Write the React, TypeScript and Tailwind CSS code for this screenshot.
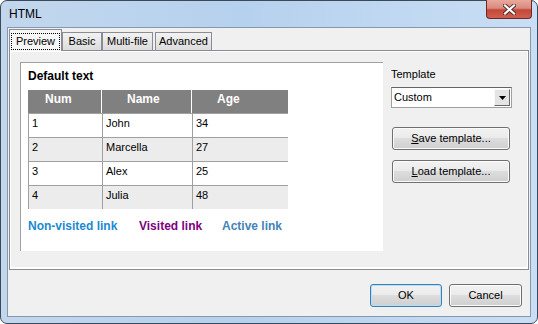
import React from 'react';

const rows = [
  { num: '1', name: 'John', age: '34' },
  { num: '2', name: 'Marcella', age: '27' },
  { num: '3', name: 'Alex', age: '25' },
  { num: '4', name: 'Julia', age: '48' },
];

const tabs = [
  { label: 'Basic', w: 'w-[40px]', ml: '' },
  { label: 'Multi-file', w: 'w-[51px]', ml: '' },
  { label: 'Advanced', w: 'w-[57px]', ml: 'ml-[2px]' },
];

const Win7Button: React.FC<{ className?: string; focused?: boolean; children: React.ReactNode }> = ({ className = '', focused, children }) => (
  <div
    className={`flex items-center justify-center rounded-[3px] border text-[11px] text-black ${
      focused ? 'border-[#3c7fb1] shadow-[inset_0_0_0_1px_#b3e0f8]' : 'border-[#707070] shadow-[inset_0_0_0_1px_#fbfbfb]'
    } bg-[linear-gradient(to_bottom,#f2f2f2_0%,#ebebeb_45%,#dddddd_50%,#cfcfcf_100%)] ${className}`}
  >
    {children}
  </div>
);

const App: React.FC = () => {
  return (
    <div className="w-[538px] h-[324px] overflow-hidden bg-white font-['Liberation_Sans',Arial,sans-serif]">
      <div className="w-full h-full flex flex-col rounded-[7px] border border-[#3b4a59] bg-[linear-gradient(to_right,#c2d7ed,#b6d1ee_45%,#c9def4)] px-[6px] pb-[6px]">
        {/* Title bar */}
        <div className="h-[26px] flex items-start justify-between">
          <span className="pl-[2px] pt-[6px] text-[12px] leading-[14px] text-black">HTML</span>
          <div className="w-[46px] h-[19px] -mt-px mr-[-1px] rounded-b-[4px] border border-t-0 border-[#6d2a24] bg-[linear-gradient(to_bottom,#e9a99c_0%,#d98b7e_45%,#c4483a_55%,#d0604f_100%)] flex items-center justify-center">
            <svg width="13" height="11" viewBox="0 0 13 11">
              <path d="M2 1.5 L11 9.5 M11 1.5 L2 9.5" stroke="#4a2a26" strokeWidth="4" strokeLinecap="square" />
              <path d="M2 1.5 L11 9.5 M11 1.5 L2 9.5" stroke="#ffffff" strokeWidth="2.2" strokeLinecap="square" />
            </svg>
          </div>
        </div>

        {/* Client area */}
        <div className="flex-1 flex flex-col border border-[#8798ab] bg-[#f0f0f0]">
          {/* Tabs */}
          <div className="h-[22px] pt-[1px] pl-[1px] flex items-end relative z-10">
            <div className="w-[53px] h-[22px] -mb-px border border-b-0 border-[#898c95] bg-[#f6f6f6] px-[1px] pt-[3px]">
              <div className="h-[17px] border border-dotted border-black flex items-center justify-center text-[11px] leading-[13px] text-black">
                Preview
              </div>
            </div>
            {tabs.map((t) => (
              <div
                key={t.label}
                className={`${t.w} ${t.ml} h-[18px] border border-b-0 border-[#898c95] bg-[linear-gradient(to_bottom,#f2f2f2,#dcdcdc)] flex items-center justify-center text-[11px] leading-[13px] text-black`}
              >
                {t.label}
              </div>
            ))}
          </div>

          {/* Tab panel */}
          <div className="h-[220px] mx-[1px] border border-[#898c95] bg-[#f0f0f0] flex pl-[10px] pt-[11px] shadow-[inset_1px_1px_0_#ffffff,inset_-1px_-2px_0_#ffffff]">
            {/* Preview box */}
            <div className="w-[363px] h-[189px] bg-white border-t border-l border-[#a0a0a0] pl-[7px]">
              <div className="h-[27px] pt-[6px] text-[12px] leading-[14px] font-bold text-black">Default text</div>
              <div className="w-[260px] flex flex-col text-black">
                <div className="h-[23px] flex gap-px bg-white text-white font-bold text-[12px] leading-[14px]">
                  <div className="w-[73px] bg-[#808080] pl-[17px] pt-[2px]">Num</div>
                  <div className="w-[89px] bg-[#808080] pl-[25px] pt-[2px]">Name</div>
                  <div className="w-[96px] bg-[#808080] pl-[25px] pt-[2px]">Age</div>
                </div>
                {rows.map((r, i) => (
                  <div
                    key={r.num}
                    className={`h-[24px] flex border-t border-[#a0a0a0] text-[11px] leading-[13px] ${i % 2 === 1 ? 'bg-[#ececec]' : 'bg-white'}`}
                  >
                    <div className="w-[74px] border-l border-[#a0a0a0] pl-[3px] pt-[3px]">{r.num}</div>
                    <div className="w-[90px] border-l border-[#a0a0a0] pl-[3px] pt-[3px]">{r.name}</div>
                    <div className="w-[96px] border-l border-[#a0a0a0] pl-[3px] pt-[3px]">{r.age}</div>
                  </div>
                ))}
              </div>
              <div className="mt-[10px] flex text-[12px] leading-[14px] font-bold">
                <span className="w-[111px] text-[#1a89d2]">Non-visited link</span>
                <span className="w-[83px] text-[#800080]">Visited link</span>
                <span className="text-[#4383b6]">Active link</span>
              </div>
            </div>

            {/* Template controls */}
            <div className="ml-[8px] w-[121px] flex flex-col pt-[6px]">
              <span className="text-[11px] leading-[13px] text-black">Template</span>
              <div className="mt-[6px] h-[21px] flex items-center justify-between border border-[#a0a0a0] border-t-[#646464] bg-white pl-[2px] pr-px">
                <span className="text-[11px] leading-[13px] text-black">Custom</span>
                <div className="w-[16px] h-[17px] flex items-center justify-center border border-[#f8f8f8] border-r-[#696969] border-b-[#696969] bg-[#e4e4e4]">
                  <svg width="7" height="4" viewBox="0 0 7 4">
                    <path d="M0 0 H7 L3.5 4 Z" fill="#000" />
                  </svg>
                </div>
              </div>
              <Win7Button className="mt-[19px] ml-px w-[118px] h-[23px]">
                <span>
                  <span className="underline">S</span>ave template...
                </span>
              </Win7Button>
              <Win7Button className="mt-[10px] ml-px w-[118px] h-[23px]">
                <span>
                  <span className="underline">L</span>oad template...
                </span>
              </Win7Button>
            </div>
          </div>

          {/* Bottom buttons */}
          <div className="flex justify-end gap-[7px] pt-[14px] pr-[8px]">
            <Win7Button focused className="w-[72px] h-[23px]">
              OK
            </Win7Button>
            <Win7Button className="w-[73px] h-[23px]">Cancel</Win7Button>
          </div>
        </div>
      </div>
    </div>
  );
};

export default App;
